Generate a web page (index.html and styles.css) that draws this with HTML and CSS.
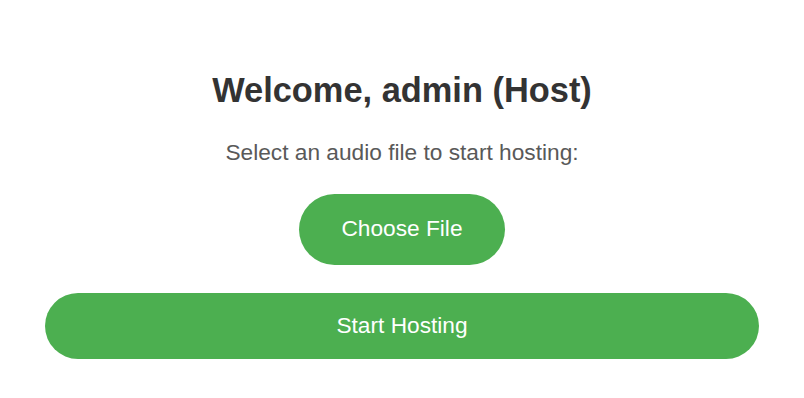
FILE: index.html
```html
<!DOCTYPE html>
<html lang="en">
<head>
<meta charset="utf-8">
<title>Host</title>
<link rel="stylesheet" href="styles.css">
</head>
<body>
  <main class="page">
    <h1 class="title">Welcome, admin (Host)</h1>
    <p class="subtitle">Select an audio file to start hosting:</p>
    <label class="btn btn-choose">Choose File<input type="file" class="file-input" accept="audio/*"></label>
    <button class="btn btn-start" type="button">Start Hosting</button>
  </main>
</body>
</html>
```
FILE: styles.css
```css
html, body {
  margin: 0;
  padding: 0;
  background: #ffffff;
}

body {
  font-family: "Liberation Sans", Arial, sans-serif;
}

.page {
  display: flex;
  flex-direction: column;
  align-items: center;
  padding: 70px 45px 0;
}

.title {
  margin: 0;
  font-size: 34.4px;
  line-height: 40px;
  font-weight: 700;
  color: #333333;
}

.subtitle {
  margin: 29px 0 0;
  font-size: 22.7px;
  line-height: 26px;
  color: #595959;
}

.btn {
  box-sizing: border-box;
  border: none;
  background: #4caf50;
  color: #ffffff;
  font-family: "Liberation Sans", Arial, sans-serif;
  font-size: 22.7px;
  line-height: 26px;
  border-radius: 40px;
  cursor: pointer;
  text-align: center;
}

.btn-choose {
  display: inline-block;
  margin-top: 29px;
  width: 206px;
  padding: 21px 0 24px;
}

.file-input {
  display: none;
}

.btn-start {
  margin-top: 28px;
  width: 100%;
  height: 66px;
  padding: 0 0 2px;
}
```
